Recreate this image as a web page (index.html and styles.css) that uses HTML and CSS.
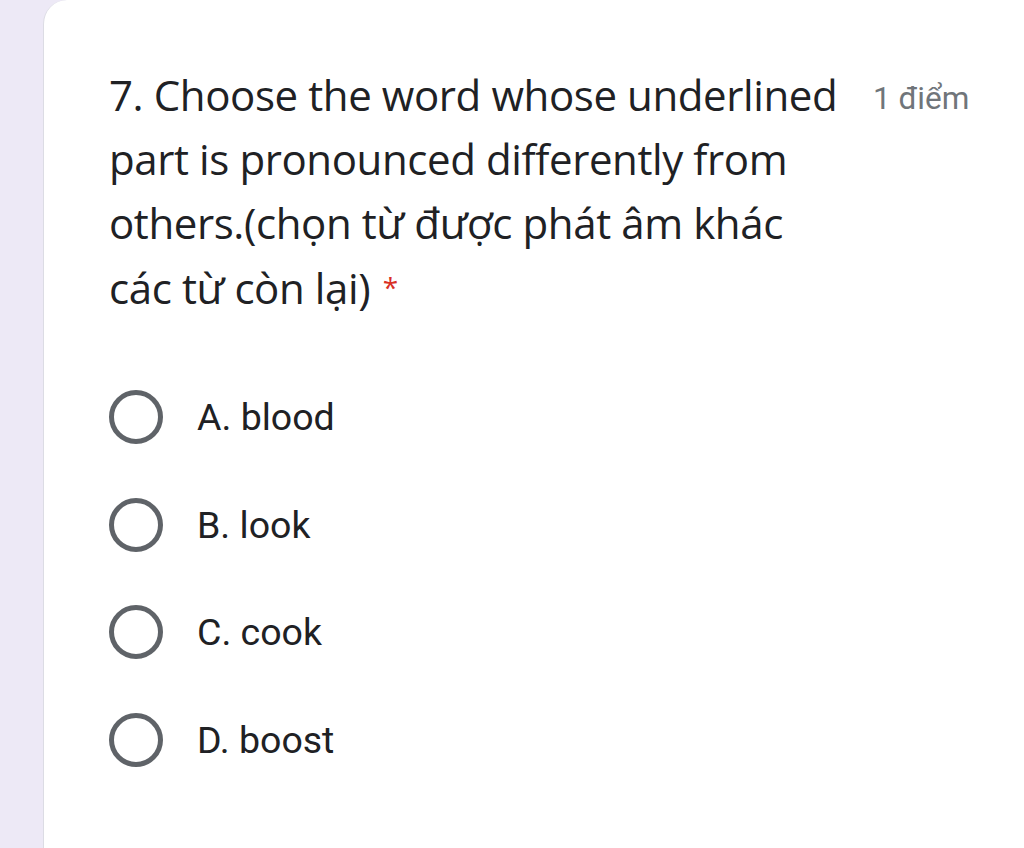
FILE: index.html
```html
<!DOCTYPE html>
<html lang="vi">
<head>
<meta charset="utf-8">
<title>Câu hỏi 7</title>
<link rel="stylesheet" href="styles.css">
</head>
<body>
<main class="card">
  <div class="header">
    <h1 class="title">7. Choose the word whose underlined<br>part is pronounced differently from<br>others.(chọn từ được phát âm khác<br>các từ còn lại) <span class="req">*</span></h1>
    <span class="points">1 điểm</span>
  </div>
  <ul class="options">
    <li class="option"><span class="radio"></span><span class="label">A. blood</span></li>
    <li class="option"><span class="radio"></span><span class="label">B. look</span></li>
    <li class="option"><span class="radio"></span><span class="label">C. cook</span></li>
    <li class="option"><span class="radio"></span><span class="label">D. boost</span></li>
  </ul>
</main>
</body>
</html>
```
FILE: styles.css
```css
html, body {
  margin: 0;
  padding: 0;
  height: 100%;
}
body {
  background: #ede9f6;
  overflow: hidden;
}
.card {
  margin-left: 43px;
  height: 860px;
  background: #ffffff;
  border-left: 1px solid #dcdce4;
  border-radius: 24px 0 0 0;
  padding: 63px 0 0 65px;
  box-sizing: border-box;
}
.header {
  display: flex;
  align-items: flex-start;
}
.title {
  margin: 0;
  width: 764px;
  font-family: "Open Sans", sans-serif;
  font-weight: 400;
  font-size: 42px;
  line-height: 64px;
  color: #202124;
  letter-spacing: -0.4px;
}
.req {
  color: #d93025;
  font-size: 28px;
  vertical-align: 6px;
  margin-left: 2px;
}
.points {
  font-family: Roboto, sans-serif;
  font-size: 31.5px;
  color: #70757a;
  margin-top: 17px;
}
.options {
  list-style: none;
  margin: 70px 0 0 0;
  padding: 0;
  display: flex;
  flex-direction: column;
  gap: 53.5px;
}
.option {
  display: flex;
  align-items: center;
  height: 54px;
}
.radio {
  width: 44px;
  height: 44px;
  border: 5px solid #5f6368;
  border-radius: 50%;
  flex: none;
}
.label {
  margin-left: 34px;
  font-family: Roboto, sans-serif;
  font-size: 37.5px;
  color: #202124;
}
```
